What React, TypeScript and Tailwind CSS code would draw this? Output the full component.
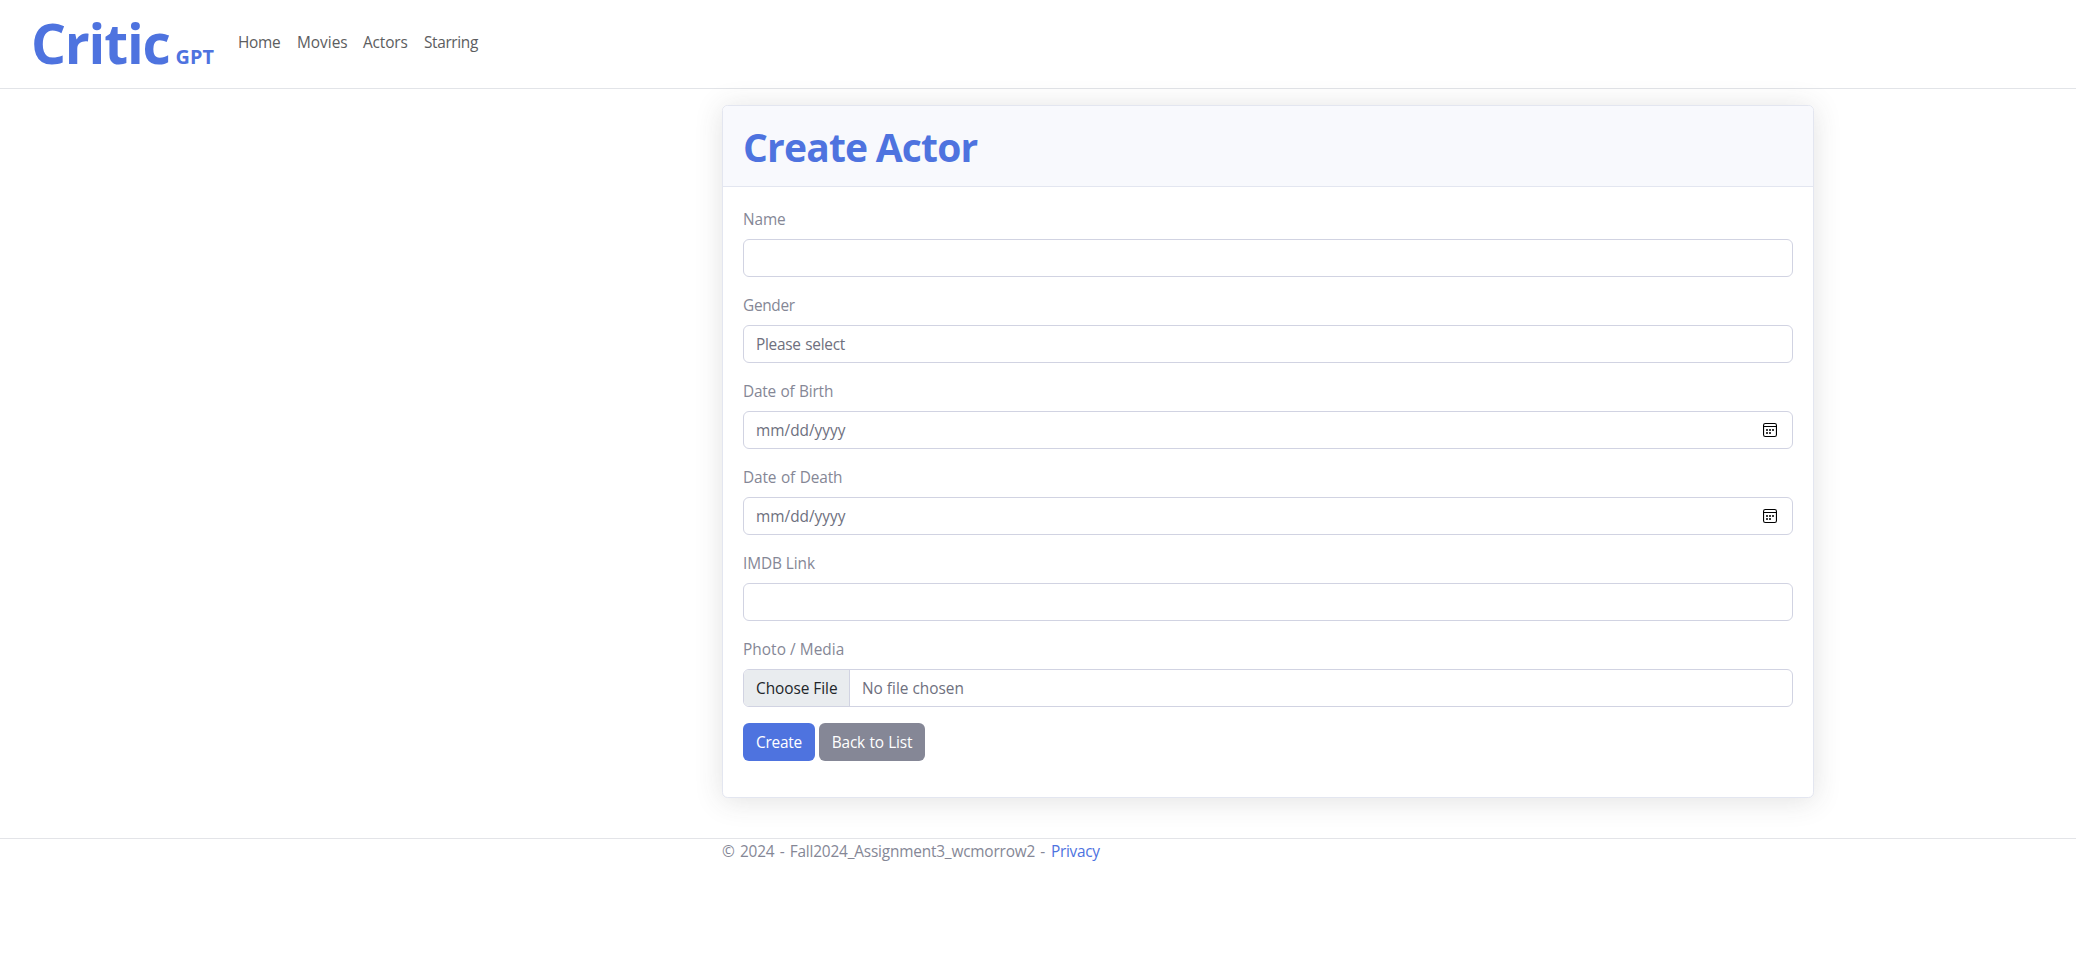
import React from 'react';

const control =
  'flex h-[38px] w-full items-center rounded-[6px] border border-[#d1d3e2] bg-white text-[#6e707e]';

function CalendarIcon() {
  return (
    <svg width="14" height="14" viewBox="0 0 14 14" fill="none" shapeRendering="geometricPrecision">
      <rect x="0.55" y="0.55" width="12.9" height="12.9" rx="1.8" stroke="#000" strokeWidth="1.1" />
      <path d="M1 3.5h12" stroke="#000" />
      <path
        d="M3 6h2v2H3zM6 6h2v2H6zM9 6h2v2H9zM3 9h2v2H3zM6 9h2v2H6z"
        fill="#3c3c3c"
      />
    </svg>
  );
}

function Field({
  label,
  tracking,
  children,
}: {
  label: string;
  tracking: string;
  children: React.ReactNode;
}) {
  return (
    <div className="mb-4">
      <label className={`mb-2 block h-6 leading-[26px] ${tracking}`}>{label}</label>
      {children}
    </div>
  );
}

function DateControl() {
  return (
    <div className={`${control} justify-between pr-[15px] pl-3`}>
      <span className="pt-0.5">mm/dd/yyyy</span>
      <CalendarIcon />
    </div>
  );
}

export default function App() {
  return (
    <div className="min-h-[972px] bg-white font-['Open_Sans',sans-serif] text-[15.4px] leading-6 text-[#858796]">
      <header className="flex h-[89px] border-b border-[#e2e4e8] pl-[31px]">
        <a className="flex w-[207px] items-baseline font-bold text-[#4e73df]">
          <span className="w-[144.5px] text-[55px] leading-[85px] tracking-[-1.2px]">Critic</span>
          <span className="text-[19.8px] leading-6 tracking-[0.1px]">GPT</span>
        </a>
        <nav className="flex pt-[31px] text-[#5c5d60]">
          <a className="w-[59px] tracking-[-0.25px]">Home</a>
          <a className="w-[66px]">Movies</a>
          <a className="w-[61px] tracking-[-0.15px]">Actors</a>
          <a className="tracking-[-0.35px]">Starring</a>
        </nav>
      </header>

      <main className="ml-[722px] w-[1092px] pt-4 pb-10">
        <section className="rounded-[5.6px] border border-[#e3e6f0] bg-white shadow-[0_2.4px_28px_0_rgba(58,59,60,0.15)]">
          <div className="h-[81px] rounded-t-[5px] border-b border-[#e3e6f0] bg-[#f8f9fd] pl-5">
            <h1 className="pt-[17px] text-[39px] leading-[48px] font-bold tracking-[-0.8px] text-[#4e73df] [word-spacing:-1px]">
              Create Actor
            </h1>
          </div>
          <form className="h-[610px] p-5" onSubmit={(e) => e.preventDefault()}>
            <Field label="Name" tracking="tracking-[-0.1px]">
              <input className={`${control} px-3`} />
            </Field>
            <Field label="Gender" tracking="tracking-[-0.3px]">
              <div className={`${control} px-3 tracking-[-0.26px]`}>
                <span className="pt-0.5 [word-spacing:0.8px]">Please select</span>
              </div>
            </Field>
            <Field label="Date of Birth" tracking="tracking-[-0.2px] [word-spacing:0.7px]">
              <DateControl />
            </Field>
            <Field label="Date of Death" tracking="tracking-[-0.12px] [word-spacing:0.7px]">
              <DateControl />
            </Field>
            <Field label="IMDB Link" tracking="tracking-[-0.08px]">
              <input className={`${control} px-3`} />
            </Field>
            <Field label="Photo / Media" tracking="tracking-[0.05px]">
              <div className={`${control} overflow-hidden`}>
                <span className="flex h-full w-[106px] shrink-0 items-center border-r border-[#d1d3e2] bg-[#e9ecef] pt-0.5 pl-3 tracking-[-0.04px] text-[#212529]">
                  Choose File
                </span>
                <span className="pt-0.5 pl-3">No file chosen</span>
              </div>
            </Field>
            <div className="flex gap-1 text-white">
              <button className="h-[38px] w-[72px] rounded-[6px] bg-[#4e73df] pt-0.5 tracking-[-0.2px]">
                Create
              </button>
              <button className="h-[38px] w-[106px] rounded-[6px] bg-[#858796] pt-0.5 tracking-[-0.2px] [word-spacing:0.7px]">
                Back to List
              </button>
            </div>
          </form>
        </section>
      </main>

      <footer className="flex border-t border-[#e3e4e8] pl-[722px] leading-[26px]">
        <span className="w-[329px] tracking-[-0.19px] whitespace-nowrap [word-spacing:1.5px]">
          © 2024 - Fall2024_Assignment3_wcmorrow2 -
        </span>
        <a className="tracking-[-0.3px] text-[#4e73df]">Privacy</a>
      </footer>
    </div>
  );
}
